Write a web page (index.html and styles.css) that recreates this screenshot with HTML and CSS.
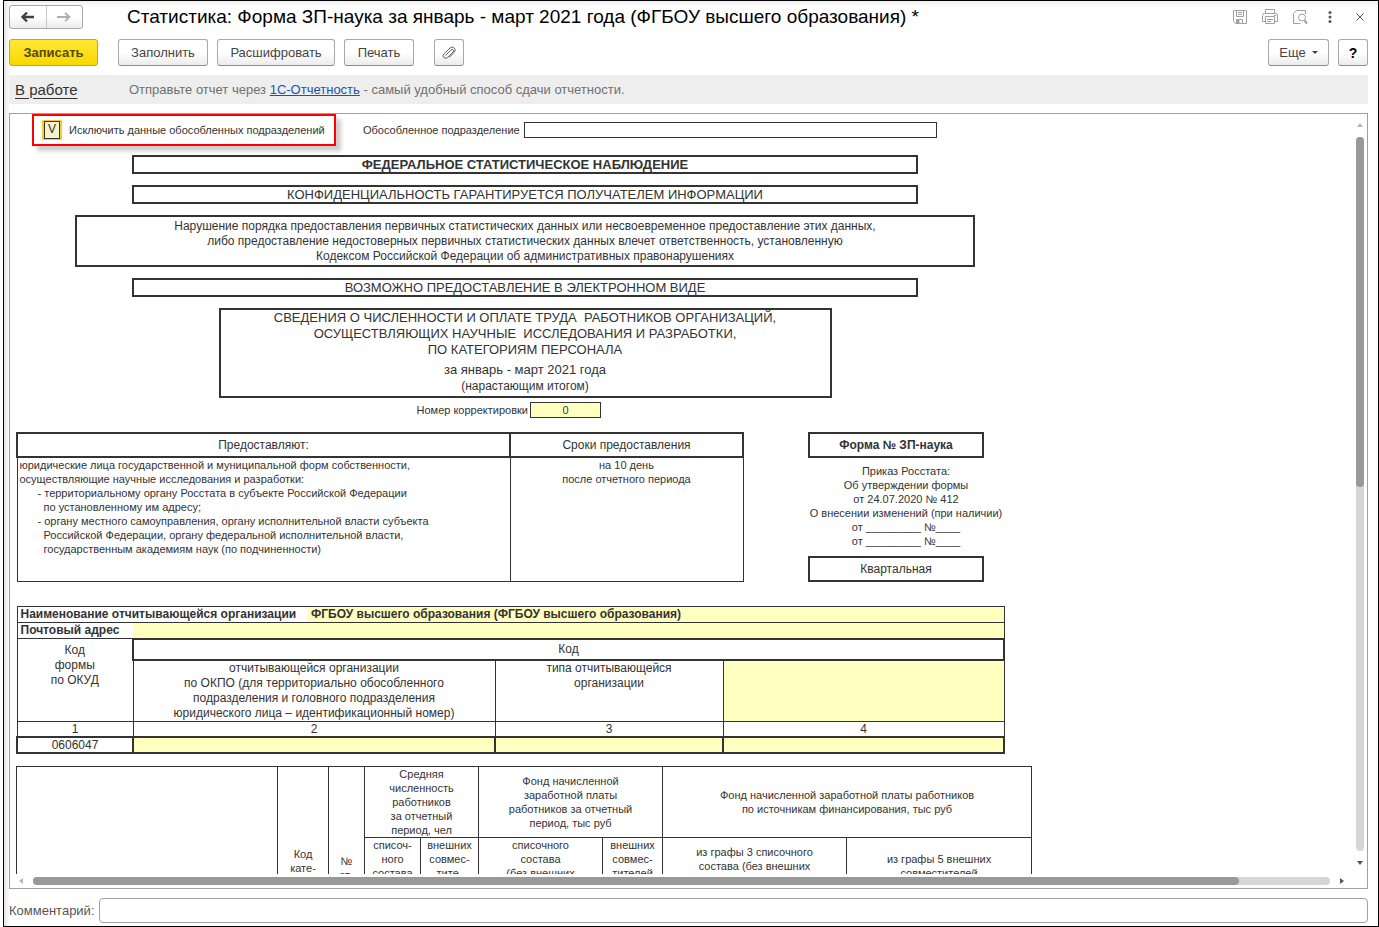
FILE: index.html
```html
<!DOCTYPE html>
<html lang="ru">
<head>
<meta charset="utf-8">
<title>Статистика: Форма ЗП-наука</title>
<link rel="stylesheet" href="styles.css">
</head>
<body>
<main class="window">
  <header class="titlebar">
    <div class="nav">
      <button type="button" class="nav-btn" aria-label="Назад"><svg width="16" height="12" viewBox="0 0 16 12"><path d="M2 6h12M7 1.500L2.500 6L7 10.500" fill="none" stroke="#404040" stroke-width="2.400"/></svg></button>
      <button type="button" class="nav-btn" aria-label="Вперед"><svg width="16" height="12" viewBox="0 0 16 12"><path d="M1 6h12M9 2l4.500 4L9 10" fill="none" stroke="#b0b0b0" stroke-width="1.800"/></svg></button>
    </div>
    <h1 class="title">Статистика: Форма ЗП-наука за январь - март 2021 года (ФГБОУ высшего образования) *</h1>
    <div class="tools">
      <button type="button" class="tool" aria-label="Сохранить"><svg width="16" height="16" viewBox="0 0 16 16" fill="none" stroke="#a0a0a0"><path d="M1.500 1.500h13v13h-11l-2-2zM4.500 1.500v6h7v-6M6 3.500h4M6 5.500h4M4.500 14.500v-4h6v4"/><path d="M5 11.500h2v3h-2z" fill="#a0a0a0"/></svg></button>
      <button type="button" class="tool" aria-label="Печать"><svg width="16" height="16" viewBox="0 0 16 16" fill="none" stroke="#a0a0a0"><path d="M3.500 4.500v-4h9v4M3.500 12.500h-3v-6q0-2 2-2h11q2 0 2 2v6h-3M3.500 7.500h9v7h-9zM5 10.500h6M5 12.500h4M12 6.500h2"/></svg></button>
      <button type="button" class="tool" aria-label="Просмотр"><svg width="16" height="16" viewBox="0 0 16 16" fill="none" stroke="#a0a0a0"><path d="M13.500 5v-3.500h-9l-3 3v10h7"/><circle cx="10" cy="8.500" r="3.500"/><path d="M12.500 11.500l2.500 3" stroke-width="2"/></svg></button>
      <button type="button" class="tool" aria-label="Меню"><svg width="16" height="16" viewBox="0 0 16 16" fill="#555"><circle cx="8" cy="3.500" r="1.500"/><circle cx="8" cy="8" r="1.500"/><circle cx="8" cy="12.500" r="1.500"/></svg></button>
      <button type="button" class="tool" aria-label="Закрыть"><svg width="16" height="16" viewBox="0 0 16 16" fill="none" stroke="#555"><path d="M4.500 4.500l7 7M11.500 4.500l-7 7"/></svg></button>
    </div>
  </header>

  <div class="commands">
    <button type="button" class="btn btn-primary">Записать</button>
    <button type="button" class="btn btn-fill">Заполнить</button>
    <button type="button" class="btn btn-decode">Расшифровать</button>
    <button type="button" class="btn btn-print">Печать</button>
    <button type="button" class="btn btn-icon btn-attach" aria-label="Прикрепить"><svg width="16" height="16" viewBox="0 0 16 16" fill="none" stroke="#606060"><path d="M4.500 10.500L10 5q1.500-1 2.300 0q.8 1-.3 2.200L6.500 12.500q-2 1.600-3.700 0q-1.600-1.700 0-3.500L9 3q2.300-1.900 4.300 0q2 2.200 0 4.300L8 12.500"/></svg></button>
    <button type="button" class="btn btn-more">Еще <span class="caret"></span></button>
    <button type="button" class="btn btn-icon btn-help">?</button>
  </div>

  <div class="status">
    <a href="#" class="state">В работе</a>
    <p class="promo">Отправьте отчет через <a href="#" class="promo-link">1С-Отчетность</a> - самый удобный способ сдачи отчетности.</p>
  </div>

  <section class="document">
    <div class="viewport">
      <div class="sheet">
        <div class="options">
          <div class="highlight">
            <input type="checkbox" id="exclude" class="check" checked>
            <label for="exclude">Исключить данные обособленных подразделений</label>
          </div>
          <label for="division" class="division-label">Обособленное подразделение</label>
          <input type="text" id="division" class="division">
        </div>

        <div class="heads">
          <div class="box box-line strong">ФЕДЕРАЛЬНОЕ СТАТИСТИЧЕСКОЕ НАБЛЮДЕНИЕ</div>
          <div class="box box-line">КОНФИДЕНЦИАЛЬНОСТЬ ГАРАНТИРУЕТСЯ ПОЛУЧАТЕЛЕМ ИНФОРМАЦИИ</div>
          <div class="box box-law">Нарушение порядка предоставления первичных статистических данных или несвоевременное предоставление этих данных,<br>либо предоставление недостоверных первичных статистических данных влечет ответственность, установленную<br>Кодексом Российской Федерации об административных правонарушениях</div>
          <div class="box box-line">ВОЗМОЖНО ПРЕДОСТАВЛЕНИЕ В ЭЛЕКТРОННОМ ВИДЕ</div>
          <div class="box box-name">
            <p>СВЕДЕНИЯ О ЧИСЛЕННОСТИ И ОПЛАТЕ ТРУДА&nbsp; РАБОТНИКОВ ОРГАНИЗАЦИЙ,<br>ОСУЩЕСТВЛЯЮЩИХ НАУЧНЫЕ&nbsp; ИССЛЕДОВАНИЯ И РАЗРАБОТКИ,<br>ПО КАТЕГОРИЯМ ПЕРСОНАЛА</p>
            <p class="period">за январь - март 2021 года</p>
            <p class="total">(нарастающим итогом)</p>
          </div>
        </div>
        <div class="correction">
          <label for="corr">Номер корректировки</label>
          <input type="text" id="corr" class="corr" value="0">
        </div>

        <div class="terms">
          <table class="grid provide">
            <colgroup><col class="p1"><col class="p2"></colgroup>
            <tr><th>Предоставляют:</th><th>Сроки предоставления</th></tr>
            <tr>
              <td class="who">юридические лица государственной и муниципальной форм собственности,<br>осуществляющие научные исследования и разработки:
                <ul class="dashes">
                  <li>- территориальному органу Росстата в субъекте Российской Федерации<br>по установленному им адресу;</li>
                  <li>- органу местного самоуправления, органу исполнительной власти субъекта<br>Российской Федерации, органу федеральной исполнительной власти,<br>государственным академиям наук (по подчиненности)</li>
                </ul>
              </td>
              <td>на 10 день<br>после отчетного периода</td>
            </tr>
          </table>
          <div class="form-info">
            <div class="box box-form strong">Форма № ЗП-наука</div>
            <p class="order">Приказ Росстата:<br>Об утверждении формы<br>от 24.07.2020 № 412<br>О внесении изменений (при наличии)<br>от _________ №____<br>от _________ №____</p>
            <div class="box box-form">Квартальная</div>
          </div>
        </div>

        <table class="grid org">
          <colgroup><col class="o1"><col class="o2"><col class="o3"><col class="o4"><col class="o5"></colgroup>
          <tr class="org-row"><th colspan="2" class="open-right">Наименование отчитывающейся организации</th><td colspan="3" class="yellow open-left org-name">ФГБОУ высшего образования (ФГБОУ высшего образования)</td></tr>
          <tr class="org-row"><th class="open-right">Почтовый адрес</th><td colspan="4" class="yellow open-left"></td></tr>
          <tr class="code-row"><td rowspan="2" class="okud">Код<br>формы<br>по ОКУД</td><td colspan="4" class="thick">Код</td></tr>
          <tr class="desc-row"><td colspan="2">отчитывающейся организации<br>по ОКПО (для территориально обособленного<br>подразделения и головного подразделения<br>юридического лица – идентификационный номер)</td><td>типа отчитывающейся<br>организации</td><td class="yellow"></td></tr>
          <tr class="num-row"><td>1</td><td colspan="2">2</td><td>3</td><td>4</td></tr>
          <tr class="value-row"><td>0606047</td><td colspan="2" class="yellow"></td><td class="yellow"></td><td class="yellow"></td></tr>
        </table>

        <table class="grid staff">
          <colgroup><col class="s1"><col class="s2"><col class="s3"><col class="s4"><col class="s5"><col class="s6"><col class="s7"><col class="s8"><col class="s9"></colgroup>
          <tr class="group-row">
            <th rowspan="2"></th>
            <th rowspan="2" class="cat">Код<br>кате-</th>
            <th rowspan="2" class="num">№<br>ст-</th>
            <th colspan="2">Средняя<br>численность<br>работников<br>за отчетный<br>период, чел</th>
            <th colspan="2">Фонд начисленной<br>заработной платы<br>работников за отчетный<br>период, тыс руб</th>
            <th colspan="2">Фонд начисленной заработной платы работников<br>по источникам финансирования, тыс руб</th>
          </tr>
          <tr class="sub-row">
            <th>списоч-<br>ного<br>состава</th>
            <th>внешних<br>совмес-<br>тите-</th>
            <th>списочного<br>состава<br>(без внешних</th>
            <th>внешних<br>совмес-<br>тителей</th>
            <th class="drop1">из графы 3 списочного<br>состава (без внешних</th>
            <th class="drop2">из графы 5 внешних<br>совместителей</th>
          </tr>
        </table>
      </div>
    </div>
    <div class="vscroll">
      <span class="arrow up"></span>
      <div class="vtrack"><div class="vthumb"></div></div>
      <span class="arrow down"></span>
    </div>
    <div class="hscroll">
      <span class="arrow left"></span>
      <div class="htrack"><div class="hthumb"></div></div>
      <span class="arrow right"></span>
    </div>
  </section>

  <footer class="comment">
    <label for="comment">Комментарий:</label>
    <input type="text" id="comment" class="comment-input">
  </footer>
</main>
</body>
</html>
```
FILE: styles.css
```css
* { box-sizing: border-box; }

body {
  margin: 0;
  background: #fff;
  color: #333;
  font-family: "Liberation Sans", Arial, sans-serif;
  font-size: 11px;
  line-height: 14px;
}

button, input { font: inherit; color: inherit; margin: 0; }
p, h1, ul { margin: 0; padding: 0; }
svg { display: block; }

.window {
  display: flex;
  flex-direction: column;
  height: 100vh;
  margin-left: 3px;
  padding: 4px 10px 3px 5px;
  border: 1px solid #000;
  background:
    linear-gradient(to right, #e4e4e4, #fff) left / 6px 100% no-repeat,
    linear-gradient(#f0f0f0, #fff) top / 100% 6px no-repeat,
    #fff;
}

/* Title */
.titlebar { display: flex; align-items: center; height: 24px; flex: none; }

.nav {
  display: flex;
  width: 74px;
  height: 24px;
  border: 1px solid #a8a8a8;
  border-radius: 3px;
  background: linear-gradient(#fff 50%, #ececec);
}

.nav-btn {
  display: flex;
  flex: 1;
  align-items: center;
  justify-content: center;
  padding: 0;
  border: 0;
  background: none;
}

.nav-btn + .nav-btn { border-left: 1px solid #c8c8c8; }

.title {
  flex: 1;
  margin-left: 44px;
  color: #000;
  font-size: 19px;
  font-weight: normal;
  line-height: 24px;
  white-space: nowrap;
}

.tools { display: flex; gap: 14px; }
.tool { padding: 0; border: 0; background: none; }

/* Commands */
.commands { display: flex; flex: none; margin-top: 10px; font-size: 13px; }

.btn {
  display: flex;
  align-items: center;
  justify-content: center;
  height: 27px;
  padding: 0;
  border: 1px solid #a8a8a8;
  border-bottom-color: #8c8c8c;
  border-radius: 3px;
  background: linear-gradient(#fff 50%, #ececec);
  color: #444;
}

.btn-primary {
  width: 89px;
  margin-right: 20px;
  border-color: #c9a800;
  background: linear-gradient(#ffe835, #f8d800);
  color: #544a10;
  font-weight: bold;
}

.btn-fill { width: 90px; margin-right: 9px; }
.btn-decode { width: 118px; margin-right: 9px; }
.btn-print { width: 70px; margin-right: 20px; }
.btn-icon { width: 30px; }
.btn-more { width: 61px; margin-left: auto; margin-right: 9px; gap: 6px; }
.btn-help { color: #000; font-size: 14px; font-weight: bold; }

.caret {
  border: 3px solid transparent;
  border-top-color: #444;
  border-bottom: 0;
}

/* Status strip */
.status {
  display: flex;
  flex: none;
  align-items: center;
  height: 29px;
  margin-top: 9px;
  padding-left: 6px;
  background: #eee;
}

.state {
  width: 114px;
  color: #333;
  font-size: 15px;
  line-height: 18px;
  text-underline-offset: 3px;
}

.promo { color: #707070; font-size: 13px; }
.promo-link { color: #1a52b5; }

/* Document with its scroll bars */
.document {
  display: grid;
  flex: 1;
  grid-template-rows: 1fr 14px;
  grid-template-columns: 1fr 16px;
  min-height: 0;
  margin-top: 9px;
  border: 1px solid #a0a0a0;
}

.viewport { min-height: 0; min-width: 0; overflow: hidden; }
.sheet { width: 1024px; padding-left: 6px; }

.vscroll {
  display: flex;
  flex-direction: column;
  align-items: center;
  padding: 9px 0 9px 2px;
}

.vtrack { flex: 1; width: 8px; margin: 10px 0; border-radius: 4px; background: #d6d6d6; }
.vthumb { height: 49%; border-radius: 4px; background: #999; }

.hscroll { display: flex; align-items: center; padding: 0 7px 0 9px; }
.htrack { flex: 1; height: 8px; margin: 0 10px; border-radius: 4px; background: #d6d6d6; }
.hthumb { width: 93%; height: 8px; border-radius: 4px; background: #999; }

.arrow { border: 3px solid transparent; }
.up { border-bottom: 4px solid #b5b5b5; border-top: 0; }
.down { border-top: 4px solid #555; border-bottom: 0; }
.left { border-right: 4px solid #b5b5b5; border-left: 0; }
.right { border-left: 4px solid #555; border-right: 0; }

/* Options above the form */
.options { display: flex; align-items: center; padding-left: 16px; }

.highlight {
  display: flex;
  align-items: center;
  gap: 7px;
  width: 304px;
  height: 32px;
  padding-left: 8px;
  border: 2px solid #f00;
  box-shadow: 5px 5px 4px #d0cccc;
}

.check {
  display: flex;
  align-items: center;
  justify-content: center;
  width: 20px;
  height: 20px;
  border: 2px solid #fbc92b;
  appearance: none;
  background: #fff;
}

.check::before {
  width: 16px;
  height: 16px;
  border: 1px solid #333;
  background: #f4f4cc;
  font-size: 12px;
  text-align: center;
}

.check:checked::before { content: "V"; }
.division-label { margin-left: 27px; }

.division {
  width: 413px;
  height: 16px;
  margin-left: 4px;
  border: 1px solid #333;
}

/* Heading boxes */
.heads {
  display: flex;
  flex-direction: column;
  align-items: center;
  gap: 11px;
  margin-top: 9px;
}

.box { border: 2px solid #333; text-align: center; }
.strong { font-weight: bold; }
.box-line { width: 786px; font-size: 13px; line-height: 15px; }
.box-law { width: 900px; padding: 2px 0 1px; font-size: 12px; line-height: 15px; }
.box-name { width: 613px; height: 90px; font-size: 13px; line-height: 16px; }
.period { margin-top: 4px; }
.total { font-size: 12px; }

.correction {
  display: flex;
  align-items: center;
  justify-content: flex-end;
  gap: 2px;
  width: 585px;
  margin-top: 4px;
}

.corr {
  width: 71px;
  height: 16px;
  padding: 0;
  border: 1px solid #333;
  background: #ffffc0;
  text-align: center;
}

/* Tables */
.grid { border-collapse: collapse; table-layout: fixed; }
.grid th, .grid td {
  padding: 0;
  border: 1px solid #333;
  font-weight: normal;
  text-align: center;
  vertical-align: top;
}
.grid .yellow { background: #ffffc0; }

.terms { display: flex; gap: 64px; margin-top: 14px; }

.provide { width: 727px; height: 150px; }
.p1 { width: 493px; }
.p2 { width: 233px; }
.grid.provide th { height: 24px; border-width: 2px; font-size: 12px; vertical-align: middle; }
.grid .who { padding-left: 2px; text-align: left; }
.dashes { padding-left: 24px; list-style: none; }
.dashes li { text-indent: -6px; }

.form-info { width: 196px; }
.box-form { width: 176px; height: 26px; font-size: 12px; line-height: 22px; }
.order { margin: 6px 0 8px; text-align: center; }

.org { width: 988px; margin-top: 24px; font-size: 12px; line-height: 15px; }
.o1 { width: 116px; }
.o2 { width: 174px; }
.o3 { width: 188px; }
.o4 { width: 228px; }
.o5 { width: 281px; }
.org-row { height: 16px; }
.grid .org-row th { padding-left: 3px; font-weight: bold; text-align: left; }
.grid .org-row .org-name { padding-left: 4px; font-weight: bold; text-align: left; }
.grid .open-right { border-right: 0; }
.grid .open-left { border-left: 0; }
.code-row { height: 21px; }
.grid .code-row .thick { border-width: 2px; line-height: 18px; }
.grid .okud { padding-top: 4px; }
.desc-row { height: 62px; }
.num-row { height: 15px; line-height: 14px; }
.value-row { height: 16px; line-height: 14px; }
.grid .value-row td { border-width: 2px; }

.staff { width: 1016px; margin-top: 12px; }
.s1 { width: 261px; }
.s2 { width: 51px; }
.s3 { width: 36px; }
.s4 { width: 56px; }
.s5 { width: 58px; }
.s6 { width: 124px; }
.s7 { width: 60px; }
.s8 { width: 184px; }
.s9 { width: 185px; }
.grid .group-row th { vertical-align: middle; }
.group-row { height: 71px; }
.sub-row { height: 71px; }
.grid .group-row .cat { padding-top: 80px; vertical-align: top; }
.grid .group-row .num { padding-top: 87px; vertical-align: top; }
.grid .sub-row .drop1 { padding-top: 7px; }
.grid .sub-row .drop2 { padding-top: 14px; }

/* Comment */
.comment {
  display: flex;
  flex: none;
  align-items: center;
  gap: 4px;
  margin-top: 9px;
  color: #555;
  font-size: 13px;
}

.comment-input {
  flex: 1;
  height: 25px;
  border: 1px solid #a0a0a0;
  border-radius: 4px;
}
```
